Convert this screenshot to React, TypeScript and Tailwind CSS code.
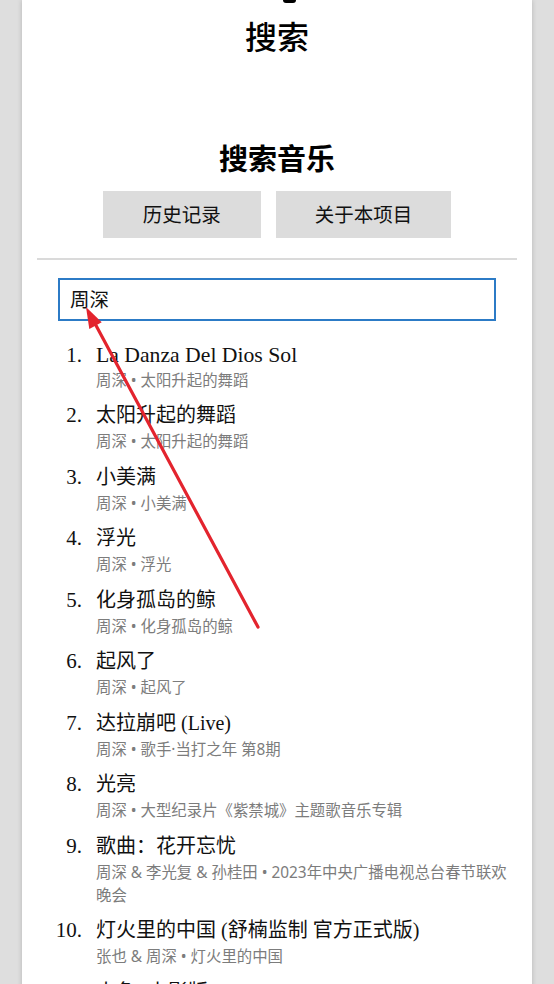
import React from 'react'

interface Song {
  title: string
  sub: string
  latin?: boolean
}

const songs: Song[] = [
  { title: 'La Danza Del Dios Sol', sub: '周深 • 太阳升起的舞蹈', latin: true },
  { title: '太阳升起的舞蹈', sub: '周深 • 太阳升起的舞蹈' },
  { title: '小美满', sub: '周深 • 小美满' },
  { title: '浮光', sub: '周深 • 浮光' },
  { title: '化身孤岛的鲸', sub: '周深 • 化身孤岛的鲸' },
  { title: '起风了', sub: '周深 • 起风了' },
  { title: '达拉崩吧 (Live)', sub: '周深 • 歌手·当打之年 第8期' },
  { title: '光亮', sub: '周深 • 大型纪录片《紫禁城》主题歌音乐专辑' },
  { title: '歌曲：花开忘忧', sub: '周深 & 李光复 & 孙桂田 • 2023年中央广播电视总台春节联欢晚会' },
  { title: '灯火里的中国 (舒楠监制 官方正式版)', sub: '张也 & 周深 • 灯火里的中国' },
  { title: '大鱼 (电影版)', sub: '周深 • 大鱼' },
]

const sans = "font-['Noto_Sans','Noto_Sans_CJK_SC',sans-serif]"
const serif = "font-['Liberation_Serif','Noto_Sans_CJK_SC',serif]"

const SongRow: React.FC<{ song: Song; index: number }> = ({ song, index }) => (
  <li className="flex mb-[9.5px]">
    <span className={`w-[60px] shrink-0 text-right text-[21px] text-[#111] ${serif} ${song.latin ? 'leading-[26.5px]' : 'leading-[29px]'}`}>
      {index + 1}.
    </span>
    <div className="ml-[14px] min-w-0 flex-1">
      <div className={`text-[20px] text-[#111] ${song.latin ? 'leading-[26.5px] text-[21.7px]' : 'leading-[29px]'} ${serif}`}>
        {song.title}
      </div>
      <div className={`text-[15.4px] leading-[23px] text-[#7c7c7c] ${sans}`}>{song.sub}</div>
    </div>
  </li>
)

const App: React.FC = () => {
  return (
    <div className="relative min-h-screen bg-[#dedede] overflow-hidden">
      <div className={`mx-auto w-[510px] min-h-[984px] bg-white shadow-[0_0_5px_rgba(0,0,0,0.18)] ${sans}`}>
        {/* bottom of the logo scrolled off the top */}
        <div className="h-[3px]">
          <div className="ml-[261px] w-[13px] h-[3px] rounded-b-full bg-black" />
        </div>

        <h1 className="mt-[14px] text-center text-[32px] leading-[40px] font-medium text-black">搜索</h1>

        <h2 className="mt-[84px] text-center text-[29px] leading-[36px] font-bold text-black">搜索音乐</h2>

        <div className="mt-[14px] flex justify-center gap-[15px]">
          <button className="h-[47px] px-[40px] bg-[#dcdcdc] text-[19.5px] text-[#111]">历史记录</button>
          <button className="h-[47px] px-[39px] bg-[#dcdcdc] text-[19.5px] text-[#111]">关于本项目</button>
        </div>

        <div className="mx-[15px] mt-[20px] h-[2px] bg-[#dadada]" />

        <div className="mx-[36px] mt-[18px] h-[43px] border-2 border-[#2c7bc6] flex items-center px-[10px]">
          <span className="text-[19.5px] text-[#111]">周深</span>
        </div>

        <ol className="mt-[21px] pr-[13px]">
          {songs.map((s, i) => (
            <SongRow key={i} song={s} index={i} />
          ))}
        </ol>
      </div>

      {/* red annotation arrow */}
      <svg className="absolute left-0 top-0 pointer-events-none" width="554" height="984" viewBox="0 0 554 984">
        <line x1="258" y1="627" x2="92" y2="318" stroke="#e3242e" strokeWidth="3.2" strokeLinecap="round" />
        <polygon points="86,307 89.3,328.9 101.7,322.3" fill="#e3242e" />
      </svg>
    </div>
  )
}

export default App
